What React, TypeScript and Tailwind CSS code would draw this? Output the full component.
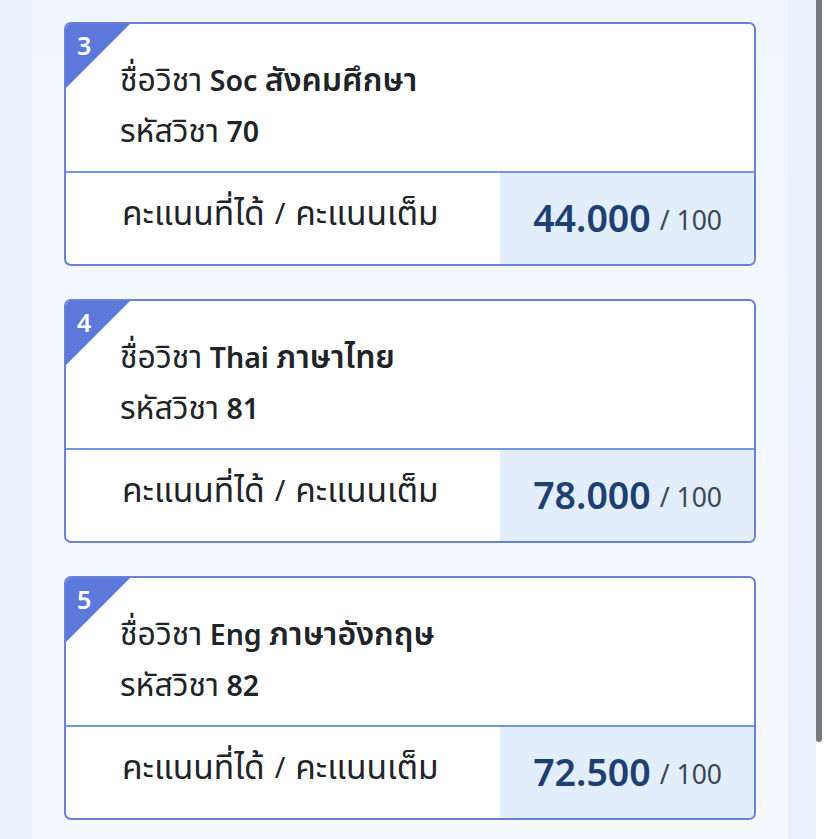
import React from 'react';

interface Subject {
  no: number;
  en: string;
  th: string;
  code: string;
  score: string;
  full: number;
}

const subjects: Subject[] = [
  { no: 3, en: 'Soc', th: 'สังคมศึกษา', code: '70', score: '44.000', full: 100 },
  { no: 4, en: 'Thai', th: 'ภาษาไทย', code: '81', score: '78.000', full: 100 },
  { no: 5, en: 'Eng', th: 'ภาษาอังกฤษ', code: '82', score: '72.500', full: 100 },
];

// thai glyphs render narrower than the source font, so bump them a bit
const Th: React.FC<{ children: React.ReactNode; className?: string }> = ({ children, className }) => (
  <span className={`text-[32px] leading-none ${className ?? ''}`}>{children}</span>
);

const SubjectCard: React.FC<{ s: Subject }> = ({ s }) => {
  return (
    <div className="relative overflow-hidden rounded-[7px] border-2 border-[#6b80d6] bg-white">
      {/* corner badge */}
      <div className="absolute left-0 top-0 h-[64px] w-[64px] bg-[#5b78da] [clip-path:polygon(0_0,100%_0,0_100%)]" />
      <span className="absolute left-[11px] top-[5px] text-[25px] font-semibold leading-[32px] text-white">{s.no}</span>

      <div className="h-[147px] overflow-hidden pl-[54px] pt-[31px] text-[28.5px] leading-[51px] text-[#202428]">
        <div className="h-[51px]">
          <Th>ชื่อวิชา</Th> <span className="font-semibold">{s.en}</span> <Th className="font-semibold">{s.th}</Th>
        </div>
        <div className="h-[51px]">
          <Th>รหัสวิชา</Th> <span className="font-semibold">{s.code}</span>
        </div>
      </div>

      <div className="flex h-[93px] border-t-2 border-[#6f97e4]">
        <div className="flex flex-1 items-center pl-[56px] pb-[11px] text-[28.5px] text-[#202428]">
          <Th className="text-[33.5px]">คะแนนที่ได้</Th>
          <span className="mx-[10px]">/</span>
          <Th className="text-[33.5px]">คะแนนเต็ม</Th>
        </div>
        <div className="flex w-[254px] items-center justify-end bg-[#e2eefc] pr-[32px]">
          <span className="text-[37.5px] font-semibold text-[#1e3f72]">{s.score}</span>
          <span className="ml-[9px] mt-[5px] text-[26.5px] text-[#3b4658]">/ {s.full}</span>
        </div>
      </div>
    </div>
  );
};

export default function App() {
  return (
    <div
      className="flex h-[839px] w-[828px] overflow-hidden bg-[#e9f1fc]"
      style={{ fontFamily: '"Noto Sans", "Noto Sans Thai", sans-serif' }}
    >
      <div className="w-[32px] shrink-0" />
      <div className="flex w-[756px] shrink-0 flex-col gap-[33px] bg-gradient-to-b from-[#f1f6fe] to-[#f6f9ff] px-[32px] pt-[22px]">
        {subjects.map((s) => (
          <SubjectCard key={s.no} s={s} />
        ))}
      </div>
      <div className="w-[28px] shrink-0" />
      <div className="flex w-[12px] shrink-0 flex-col bg-white">
        <div className="h-[742px] w-[6px] rounded-b-[3px] bg-[#747982]" />
      </div>
    </div>
  );
}
